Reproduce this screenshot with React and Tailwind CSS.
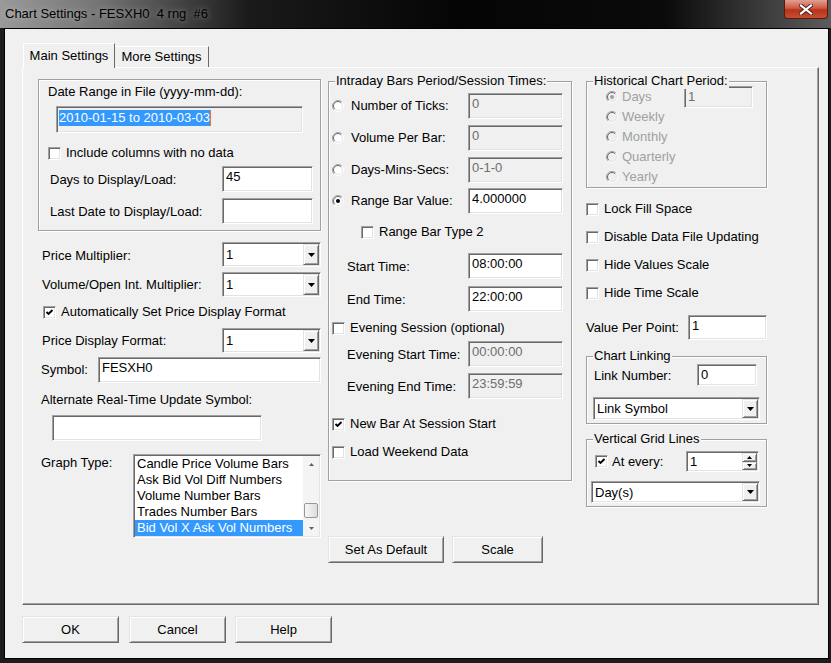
import React from 'react';
import clsx from 'clsx';

// classic win32 edge styles
const sunken = 'border border-[#a0a0a0] border-b-white border-r-white shadow-[inset_1px_1px_0_#696969,inset_-1px_-1px_0_#e3e3e3]';
const raised = 'border border-[#e3e3e3] border-b-[#696969] border-r-[#696969] shadow-[inset_1px_1px_0_#fff,inset_-1px_-1px_0_#a0a0a0]';
const etched = 'border border-[#a0a0a0] shadow-[inset_1px_1px_0_#fff,1px_1px_0_#fff]';

function Tri({ up, small, color = '#000' }) {
  if (small) {
    return (
      <svg width="5" height="3" viewBox="0 0 5 3">
        <path d={up ? 'M0 3h5L2.5 0z' : 'M0 0h5L2.5 3z'} fill={color} />
      </svg>
    );
  }
  return (
    <svg width="7" height="4" viewBox="0 0 7 4">
      <path d={up ? 'M0 4h7L3.5 0z' : 'M0 0h7L3.5 4z'} fill={color} />
    </svg>
  );
}

function Field({ value, disabled, className }) {
  return (
    <div className={clsx(sunken, 'shrink-0 pl-[3px] pt-[2px] leading-[16px]', disabled ? 'bg-[#f0f0f0] text-[#6d6d6d]' : 'bg-white', className)}>
      {value}
    </div>
  );
}

function Combo({ value, className }) {
  return (
    <div className={clsx(sunken, 'shrink-0 bg-white flex p-[1px]', className)}>
      <div className="flex-1 flex items-center pl-[2px] pt-[1px]">{value}</div>
      <div className={clsx(raised, 'w-[16px] bg-[#f0f0f0] flex items-center justify-center')}>
        <Tri />
      </div>
    </div>
  );
}

function Check({ checked }) {
  return (
    <span className={clsx(sunken, 'w-[13px] h-[13px] bg-white shrink-0 flex items-center justify-center')}>
      {checked && (
        <svg width="9" height="9" viewBox="0 0 9 9">
          <path d="M1.5 4L3.5 6L7.5 2" stroke="#000" strokeWidth="1.9" fill="none" />
        </svg>
      )}
    </span>
  );
}

function CheckRow({ label, checked, className }) {
  return (
    <div className={clsx('flex items-center h-[16px]', className)}>
      <Check checked={checked} />
      <span className="ml-[5px] whitespace-nowrap">{label}</span>
    </div>
  );
}

function Radio({ checked, disabled }) {
  return (
    <svg width="12" height="12" viewBox="0 0 12 12" className="shrink-0">
      <circle cx="6" cy="6" r="5.5" fill={disabled ? '#f0f0f0' : '#fff'} />
      <path d="M2.1 9.9 A5.5 5.5 0 0 1 9.9 2.1" stroke="#a0a0a0" fill="none" />
      <path d="M2.8 9.2 A4.5 4.5 0 0 1 9.2 2.8" stroke="#696969" fill="none" />
      <path d="M9.9 2.1 A5.5 5.5 0 0 1 2.1 9.9" stroke="#fff" fill="none" />
      <path d="M9.2 2.8 A4.5 4.5 0 0 1 2.8 9.2" stroke="#e3e3e3" fill="none" />
      {checked && <circle cx="6" cy="6" r="2" fill={disabled ? '#a0a0a0' : '#000'} />}
    </svg>
  );
}

function Group({ title, className, children }) {
  return (
    <div className={clsx(etched, 'relative flex flex-col shrink-0', className)}>
      {title && (
        <span className="absolute -top-[9px] left-[6px] bg-[#f0f0f0] px-[1px] whitespace-nowrap">{title}</span>
      )}
      {children}
    </div>
  );
}

function Button({ label, className }) {
  return (
    <div className={clsx(raised, 'shrink-0 bg-[#f0f0f0] flex items-center justify-center', className)}>
      {label}
    </div>
  );
}

function TitleBar() {
  return (
    <div className="h-[28px] shrink-0 flex items-start bg-[linear-gradient(to_right,#9a9a9a_0%,#747474_12%,#1a1a1a_30%,#050505_55%,#0a0a0a_80%,#3c3c3c_92%,#5c5c5c_100%)]">
      <span className="ml-[5px] mt-[6px] whitespace-pre text-black [text-shadow:0_0_6px_rgba(255,255,255,0.45)]">
        Chart Settings - FESXH0  4 rng  #6
      </span>
      <div className="flex-1" />
      <div className="mr-[3px] w-[44px] h-[19px] rounded-b-[4px] border border-t-0 border-[#5a1a12] bg-[linear-gradient(to_bottom,#e0a093_0%,#cf5a42_45%,#b8321c_55%,#c4502e_100%)] flex items-center justify-center">
        <svg width="14" height="11" viewBox="0 0 14 11">
          <path d="M2 1.5L12 9.5M12 1.5L2 9.5" stroke="#4a2018" strokeWidth="4" strokeLinecap="square" />
          <path d="M2 1.5L12 9.5M12 1.5L2 9.5" stroke="#fff" strokeWidth="2.2" strokeLinecap="square" />
        </svg>
      </div>
    </div>
  );
}

const graphTypes = [
  'Candle Price Volume Bars',
  'Ask Bid Vol Diff Numbers',
  'Volume Number Bars',
  'Trades Number Bars',
  'Bid Vol X Ask Vol Numbers',
];

function ListBox() {
  return (
    <div className={clsx(sunken, 'w-[188px] h-[84px] bg-white flex p-[1px] shrink-0')}>
      <div className="flex-1 flex flex-col">
        {graphTypes.map((t, i) => (
          <div key={t} className={clsx('h-[16px] pl-[2px] whitespace-nowrap', i === 4 && 'bg-[#3399ff] text-white')}>
            {t}
          </div>
        ))}
      </div>
      <div className="w-[16px] bg-[#f4f4f4] flex flex-col items-center">
        <div className="h-[16px] flex items-center justify-center"><Tri up small color="#606060" /></div>
        <div className="h-[31px]" />
        <div className="w-[14px] h-[15px] rounded-[2px] border border-[#979797] bg-[linear-gradient(to_right,#f6f6f6,#dedede)]" />
        <div className="flex-1" />
        <div className="h-[16px] flex items-center justify-center"><Tri small color="#606060" /></div>
      </div>
    </div>
  );
}

function LeftColumn() {
  return (
    <div className="ml-[15px] mt-[11px] w-[283px] flex flex-col shrink-0">
      <Group className="h-[152px]">
        <div className="mt-[4px] ml-[9px]">Date Range in File (yyyy-mm-dd):</div>
        <div className={clsx(sunken, 'mt-[6px] ml-[17px] w-[247px] h-[27px] bg-[#f0f0f0] pl-[2px] pt-[3px] flex items-start')}>
          <span className="bg-[#3399ff] text-white leading-[16px]">2010-01-15 to 2010-03-03</span>
          <span className="w-[1px] h-[16px] bg-[#e07a1f]" />
        </div>
        <CheckRow className="mt-[12px] ml-[9px]" label="Include columns with no data" />
        <div className="mt-[5px] flex items-center">
          <span className="ml-[11px] w-[172px] pt-[2px]">Days to Display/Load:</span>
          <Field className="w-[91px] h-[26px]" value="45" />
        </div>
        <div className="mt-[6px] flex items-center">
          <span className="ml-[11px] w-[172px] pt-[2px]">Last Date to Display/Load:</span>
          <Field className="w-[91px] h-[26px]" value="" />
        </div>
      </Group>

      <div className="mt-[11px] flex items-center">
        <span className="pl-[4px] w-[184px] pt-[2px]">Price Multiplier:</span>
        <Combo className="w-[99px] h-[25px]" value="1" />
      </div>
      <div className="mt-[5px] flex items-center">
        <span className="pl-[4px] w-[184px] pt-[1px]">Volume/Open Int. Multiplier:</span>
        <Combo className="w-[99px] h-[25px]" value="1" />
      </div>
      <CheckRow className="mt-[7px] ml-[5px]" checked label="Automatically Set Price Display Format" />
      <div className="mt-[8px] flex items-center">
        <span className="pl-[4px] w-[184px]">Price Display Format:</span>
        <Combo className="w-[99px] h-[25px]" value="1" />
      </div>
      <div className="mt-[4px] flex items-center">
        <span className="pl-[3px] w-[60px]">Symbol:</span>
        <Field className="w-[223px] h-[26px]" value="FESXH0" />
      </div>
      <div className="mt-[9px] pl-[3px]">Alternate Real-Time Update Symbol:</div>
      <Field className="mt-[7px] ml-[14px] w-[210px] h-[26px]" value="" />
      <div className="mt-[13px] flex items-start">
        <span className="pl-[3px] pt-[1px] w-[95px]">Graph Type:</span>
        <ListBox />
      </div>
    </div>
  );
}

function RadioField({ label, value, checked, disabled, className }) {
  return (
    <div className={clsx('flex items-center ml-[3px]', className)}>
      <Radio checked={checked} />
      <span className="ml-[7px] w-[117px] whitespace-nowrap">{label}</span>
      <Field className="w-[95px] h-[26px]" value={value} disabled={disabled} />
    </div>
  );
}

function TimeField({ label, value, disabled, className }) {
  return (
    <div className={clsx('flex items-center', className)}>
      <span className="ml-[18px] w-[121px] whitespace-nowrap pt-[1px]">{label}</span>
      <Field className="w-[95px] h-[26px]" value={value} disabled={disabled} />
    </div>
  );
}

function MiddleColumn() {
  return (
    <div className="ml-[7px] mt-[13px] w-[244px] flex flex-col shrink-0">
      <Group title="Intraday Bars Period/Session Times:" className="h-[400px]">
        <RadioField className="mt-[11px]" label="Number of Ticks:" value="0" disabled />
        <RadioField className="mt-[6px]" label="Volume Per Bar:" value="0" disabled />
        <RadioField className="mt-[6px]" label="Days-Mins-Secs:" value="0-1-0" disabled />
        <RadioField className="mt-[5px]" label="Range Bar Value:" value="4.000000" checked />
        <CheckRow className="mt-[10px] ml-[32px]" label="Range Bar Type 2" />
        <TimeField className="mt-[13px]" label="Start Time:" value="08:00:00" />
        <TimeField className="mt-[7px]" label="End Time:" value="22:00:00" />
        <CheckRow className="mt-[8px] ml-[3px]" label="Evening Session (optional)" />
        <TimeField className="mt-[5px]" label="Evening Start Time:" value="00:00:00" disabled />
        <TimeField className="mt-[6px]" label="Evening End Time:" value="23:59:59" disabled />
        <CheckRow className="mt-[17px] ml-[3px]" checked label="New Bar At Session Start" />
        <CheckRow className="mt-[12px] ml-[3px]" label="Load Weekend Data" />
      </Group>
      <div className="mt-[55px] flex">
        <Button className="w-[116px] h-[27px]" label="Set As Default" />
        <Button className="ml-[8px] w-[91px] h-[27px]" label="Scale" />
      </div>
    </div>
  );
}

const periods = ['Weekly', 'Monthly', 'Quarterly', 'Yearly'];

function RightColumn() {
  return (
    <div className="ml-[14px] mt-[13px] w-[181px] flex flex-col shrink-0">
      <Group title="Historical Chart Period:" className="h-[107px]">
        <div className="mt-[5px] ml-[19px] h-[20px] flex items-center">
          <Radio checked disabled />
          <span className="ml-[4px] w-[62px] text-[#a0a0a0]">Days</span>
          <Field className="w-[69px] h-[22px]" value="1" disabled />
        </div>
        {periods.map((p) => (
          <div key={p} className="ml-[19px] h-[20px] flex items-center">
            <Radio disabled />
            <span className="ml-[4px] text-[#a0a0a0]">{p}</span>
          </div>
        ))}
      </Group>
      <CheckRow className="mt-[13px]" label="Lock Fill Space" />
      <CheckRow className="mt-[12px]" label="Disable Data File Updating" />
      <CheckRow className="mt-[12px]" label="Hide Values Scale" />
      <CheckRow className="mt-[12px]" label="Hide Time Scale" />
      <div className="mt-[14px] flex items-center">
        <span className="w-[102px] whitespace-nowrap">Value Per Point:</span>
        <Field className="w-[79px] h-[25px]" value="1" />
      </div>
      <Group title="Chart Linking" className="mt-[16px] h-[68px]">
        <div className="mt-[7px] ml-[7px] flex items-center">
          <span className="w-[103px] pt-[2px]">Link Number:</span>
          <Field className="w-[60px] h-[22px]" value="0" />
        </div>
        <Combo className="mt-[11px] ml-[6px] w-[167px] h-[23px]" value="Link Symbol" />
      </Group>
      <Group title="Vertical Grid Lines" className="mt-[15px] h-[68px]">
        <div className="mt-[11px] ml-[8px] flex items-center">
          <Check checked />
          <span className="ml-[4px] w-[74px]">At every:</span>
          <div className={clsx(sunken, 'w-[73px] h-[21px] bg-white flex p-[1px]')}>
            <div className="flex-1 pl-[2px] leading-[17px]">1</div>
            <div className="w-[15px] flex flex-col">
              <div className={clsx(raised, 'flex-1 bg-[#f0f0f0] flex items-center justify-center')}><Tri up small /></div>
              <div className={clsx(raised, 'flex-1 bg-[#f0f0f0] flex items-center justify-center')}><Tri small /></div>
            </div>
          </div>
        </div>
        <Combo className="mt-[9px] ml-[4px] w-[169px] h-[22px]" value="Day(s)" />
      </Group>
    </div>
  );
}

export default function App() {
  return (
    <div className="w-[831px] h-[663px] bg-[#1c1c1c] flex flex-col overflow-hidden font-['Liberation_Sans',Arial,sans-serif] text-[13px] leading-[16px] text-black">
      <TitleBar />
      <div className="ml-[4px] mr-[2px] h-[631px] shrink-0 border border-black bg-[#f0f0f0] flex flex-col pl-[17px] pt-[14px]">
        <div className="flex items-end h-[24px] ml-[1px] relative z-10">
          <div className="h-[25px] -mb-[1px] w-[92px] bg-[#f0f0f0] border-t border-l border-white border-r border-r-[#696969] flex items-center justify-center">
            Main Settings
          </div>
          <div className="h-[21px] w-[94px] border-t border-white border-r border-r-[#696969] flex items-center justify-center">
            More Settings
          </div>
        </div>
        <div className="w-[797px] h-[538px] shrink-0 border border-white border-r-[#696969] border-b-[#696969] shadow-[inset_-1px_-1px_0_#a0a0a0] flex items-start">
          <LeftColumn />
          <MiddleColumn />
          <RightColumn />
        </div>
        <div className="mt-[11px] flex">
          <Button className="w-[97px] h-[27px]" label="OK" />
          <Button className="ml-[10px] w-[97px] h-[27px]" label="Cancel" />
          <Button className="ml-[9px] w-[97px] h-[27px]" label="Help" />
        </div>
      </div>
    </div>
  );
}
